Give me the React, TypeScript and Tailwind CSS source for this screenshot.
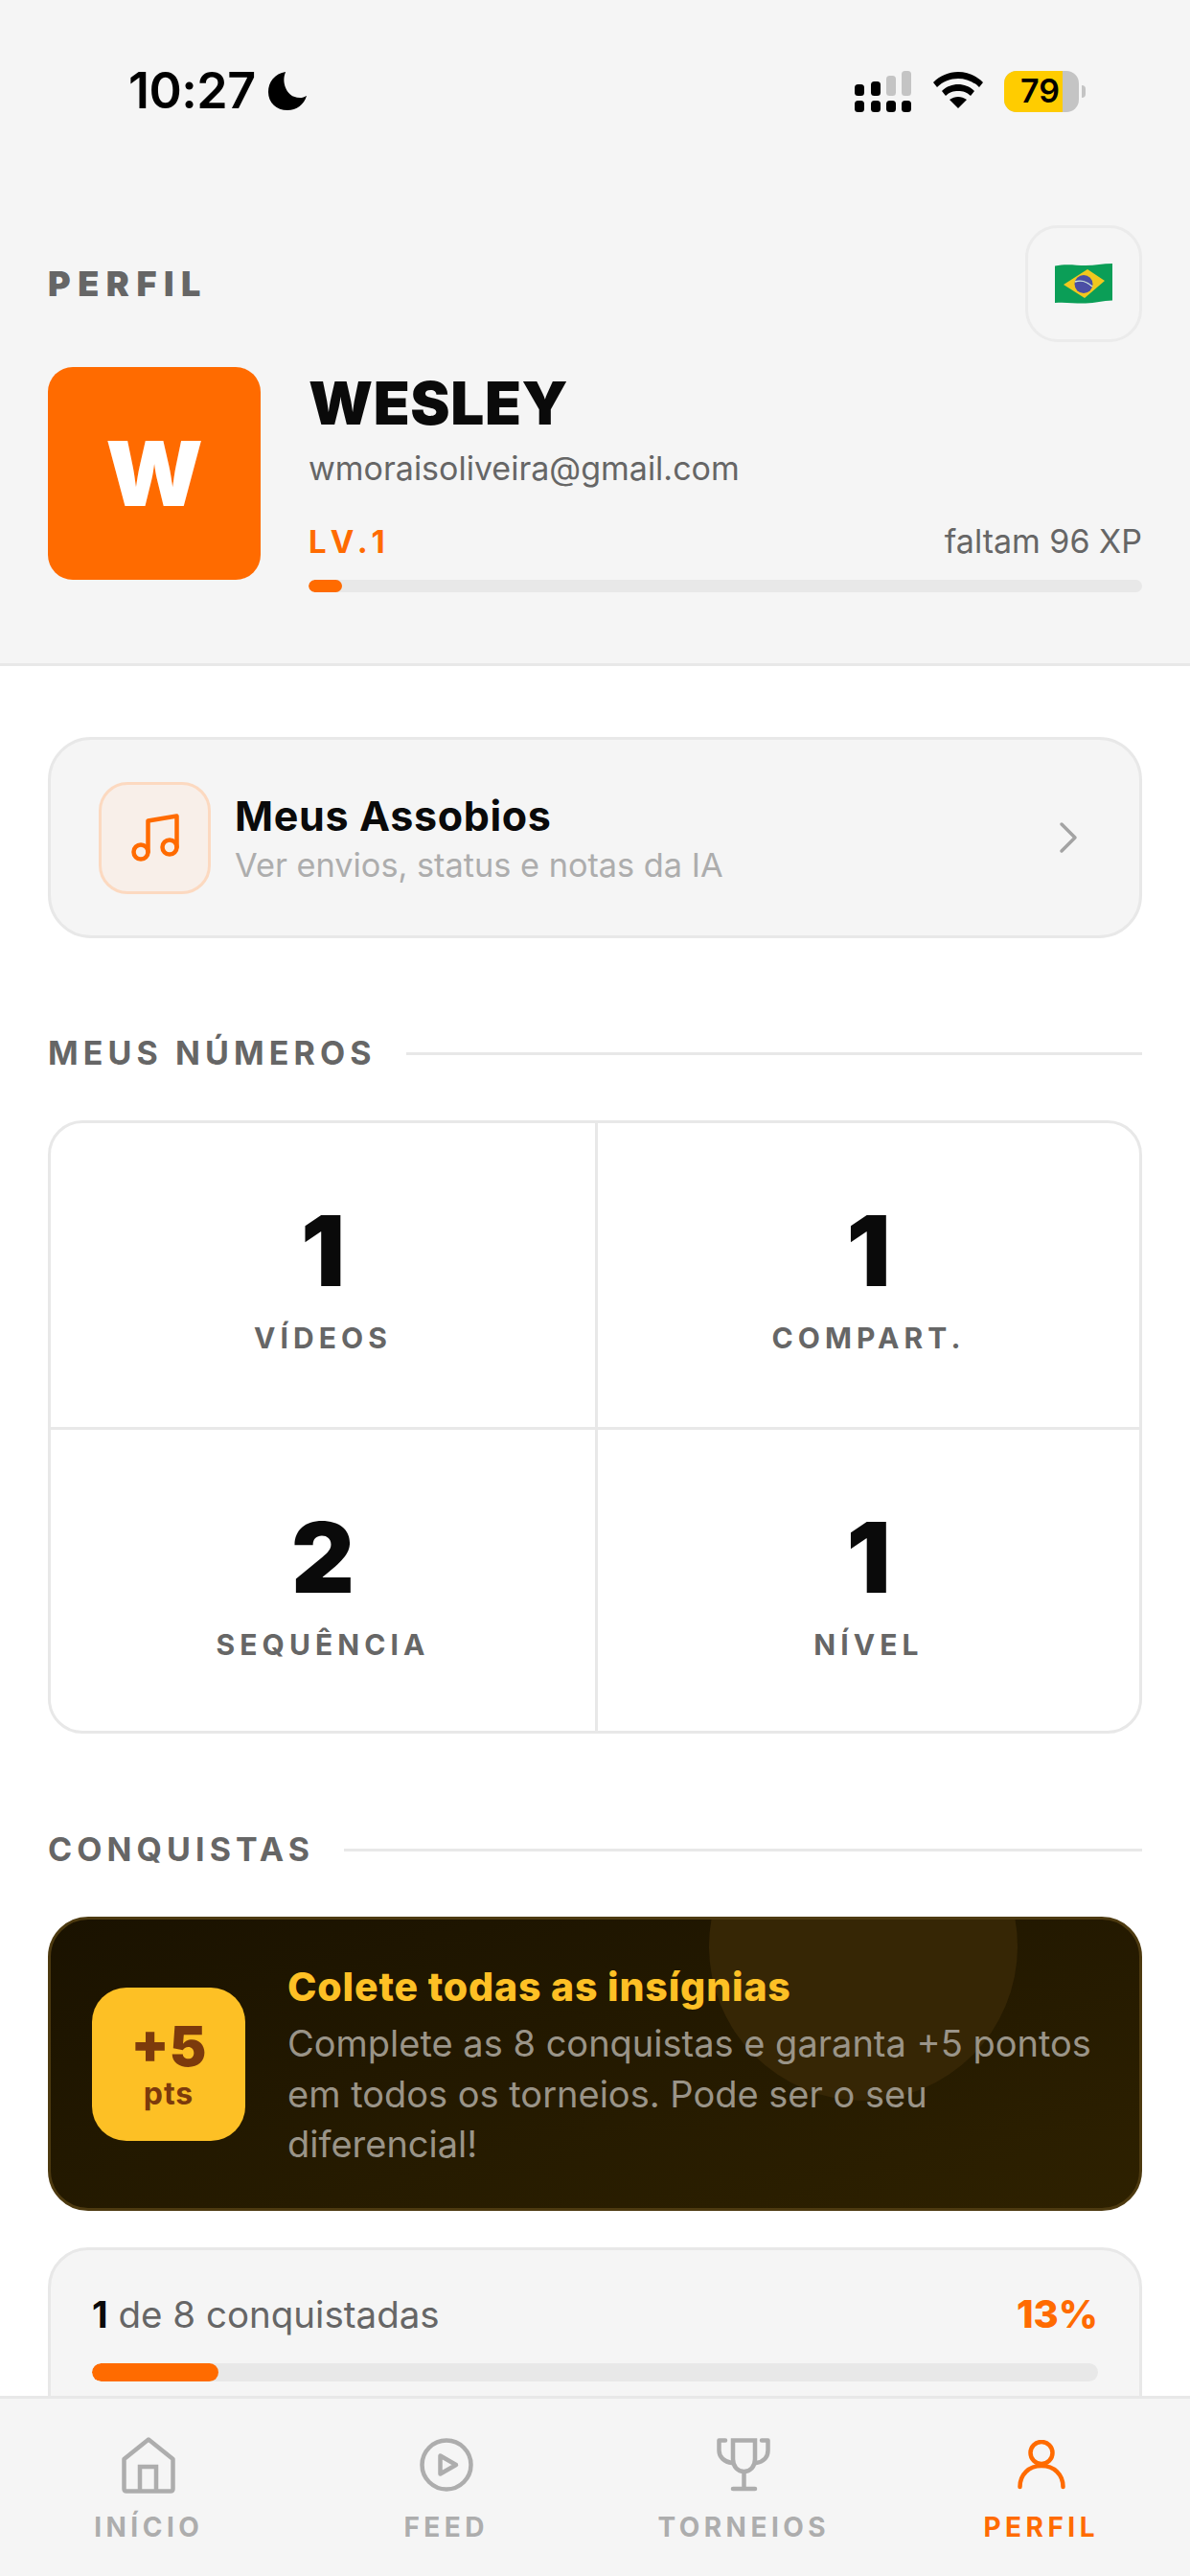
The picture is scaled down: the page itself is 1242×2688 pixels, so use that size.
import React from 'react';
import { ChevronRight } from 'lucide-react';

const sans = "font-['Inter','Liberation_Sans',sans-serif]";

function SectionTitle({ label }: { label: string }) {
  return (
    <div className="flex items-center gap-[31px]">
      <span className="text-[34px] leading-[40px] font-bold tracking-[0.15em] text-[#666666] whitespace-nowrap">{label}</span>
      <div className="flex-1 h-[3px] bg-[#e8e8e8]" />
    </div>
  );
}

function Stat({ value, label, className }: { value: string; label: string; className?: string }) {
  return (
    <div className={`flex flex-col items-center pt-[81px] ${className ?? ''}`}>
      <span className="text-[102px] leading-[104px] font-black text-[#0a0a0a]">{value}</span>
      <span className="mt-[21px] text-[30px] leading-[36px] font-bold tracking-[0.17em] text-[#666666]">{label}</span>
    </div>
  );
}

function BrazilFlag() {
  return (
    <svg width="60" height="44" viewBox="0 0 60 44">
      <path d="M0 3.5C12 1 22 3 32 3C42 3 50 1 60 1V39.5C50 40 42 42 32 42.5C22 43 12 41 0 42Z" fill="#0b9e57" />
      <path d="M9 23L34 7L52 19L31 37Z" fill="#f2c81e" />
      <circle cx="30" cy="22.5" r="9.5" fill="#4b4fa5" />
      <path d="M21 20C27 18 34 20 39 25" stroke="#cfe8dc" strokeWidth="1.5" fill="none" />
    </svg>
  );
}

function StatusBar() {
  return (
    <div className="h-[140px] pt-[68px] pl-[134px] pr-[109px] flex items-start justify-between">
      <div className="flex items-center gap-[13px] h-[54px]">
        <span className="text-[52px] leading-[54px] font-semibold text-black tracking-[-0.01em]">10:27</span>
        <svg width="42" height="42" viewBox="0 0 44 44">
          <path d="M19 1C7 3 0 12 0 23C0 35 9 43 21 43C31 43 39 37 42 27C38 30 33 30 28 28C20 25 14 12 19 1Z" fill="#000" />
        </svg>
      </div>
      <div className="flex items-center gap-[22px] h-[54px]">
        <svg width="60" height="43" viewBox="0 0 60 43">
          <rect x="0" y="14" width="10" height="12" rx="3.5" fill="#000" />
          <rect x="17" y="11" width="10" height="15" rx="3.5" fill="#000" />
          <rect x="33" y="5" width="10" height="21" rx="3.5" fill="#c4c4c4" />
          <rect x="49" y="0" width="10" height="26" rx="3.5" fill="#c4c4c4" />
          <rect x="0" y="31" width="10" height="12" rx="3.5" fill="#000" />
          <rect x="17" y="31" width="10" height="12" rx="3.5" fill="#000" />
          <rect x="33" y="31" width="10" height="12" rx="3.5" fill="#000" />
          <rect x="49" y="31" width="10" height="12" rx="3.5" fill="#000" />
        </svg>
        <svg width="52" height="40" viewBox="0 0 52 40">
          <path d="M26 0C36 0 45 4 52 11L48 16C42 10 34 7 26 7C18 7 10 10 4 16L0 11C7 4 16 0 26 0Z" fill="#000" />
          <path d="M26 13C32 13 38 15 43 20L39 25C35 21 31 20 26 20C21 20 17 21 13 25L9 20C14 15 20 13 26 13Z" fill="#000" />
          <path d="M26 26C29 26 32 27 35 29L26 38L17 29C20 27 23 26 26 26Z" fill="#000" />
        </svg>
        <div className="flex items-center gap-[3px]">
          <div className="relative w-[78px] h-[43px] rounded-[13px] bg-[#c4c4c4] overflow-hidden">
            <div className="h-full w-[61px] bg-[#ffcc00] flex items-center justify-end pr-[3px]">
              <span className="text-[34px] leading-[40px] font-semibold text-black">79</span>
            </div>
          </div>
          <div className="w-[4px] h-[13px] rounded-r-[4px] bg-[#c4c4c4]" />
        </div>
      </div>
    </div>
  );
}

function NavItem({ label, active, children }: { label: string; active?: boolean; children: React.ReactNode }) {
  return (
    <div className="flex flex-col items-center">
      <div className={`h-[62px] flex items-center justify-center ${active ? 'text-[#ff6b00]' : 'text-[#adadad]'}`}>{children}</div>
      <span className={`mt-[18px] text-[28px] leading-[32px] font-bold tracking-[0.16em] ${active ? 'text-[#ff6b00]' : 'text-[#adadad]'}`}>{label}</span>
    </div>
  );
}

export default function App() {
  return (
    <div className={`${sans} relative w-[1242px] h-[2688px] overflow-hidden bg-white flex flex-col`}>
      <div className="flex-1 min-h-0 overflow-hidden">
        {/* Header */}
        <div className="h-[695px] bg-[#f5f5f5] border-b-[3px] border-[#e8e8e8]">
          <StatusBar />
          <div className="px-[50px]">
            <div className="flex items-center justify-between mt-[95px]">
              <span className="text-[36px] leading-[40px] font-black tracking-[0.21em] text-[#666666]">PERFIL</span>
              <div className="w-[122px] h-[122px] rounded-[34px] border-[3px] border-[#ebebeb] flex items-center justify-center">
                <BrazilFlag />
              </div>
            </div>
            <div className="flex mt-[26px]">
              <div className="w-[222px] h-[222px] rounded-[26px] bg-[#ff6b00] flex items-center justify-center shrink-0">
                <span className="text-[94px] leading-none font-black text-white">W</span>
              </div>
              <div className="flex-1 ml-[50px]">
                <div className="text-[62px] leading-[64px] font-black text-[#0a0a0a] tracking-[0.01em] mt-[6px]">WESLEY</div>
                <div className="mt-[16px] text-[34px] leading-[40px] text-[#666666]">wmoraisoliveira@gmail.com</div>
                <div className="mt-[36px] flex items-center justify-between">
                  <span className="text-[33px] leading-[40px] font-bold tracking-[0.2em] text-[#ff6b00]">LV.1</span>
                  <span className="text-[34px] leading-[40px] text-[#666666]">faltam 96 XP</span>
                </div>
                <div className="mt-[20px] h-[13px] rounded-full bg-[#e8e8e8] overflow-hidden">
                  <div className="h-full w-[35px] rounded-full bg-[#ff6b00]" />
                </div>
              </div>
            </div>
          </div>
        </div>

        <div className="px-[50px] pt-[74px]">
          {/* Meus Assobios */}
          <div className="h-[210px] rounded-[45px] bg-[#f5f5f5] border-[3px] border-[#e8e8e8] flex items-center pl-[50px] pr-[46px]">
            <div className="w-[117px] h-[117px] rounded-[30px] bg-[#f8efe9] border-[3px] border-[#fcd9c0] flex items-center justify-center shrink-0">
              <svg width="60" height="60" viewBox="0 0 24 24" fill="none" stroke="#ff6b00" strokeWidth="1.8" strokeLinecap="round" strokeLinejoin="round">
                <path d="M9 18V5l12-2v13" />
                <circle cx="6" cy="18" r="3" />
                <circle cx="18" cy="16" r="3" />
              </svg>
            </div>
            <div className="ml-[25px] flex-1">
              <div className="text-[43px] leading-[50px] font-bold tracking-[0.015em] text-[#0a0a0a]">Meus Assobios</div>
              <div className="mt-[7px] text-[34.3px] leading-[40px] text-[#adadad]">Ver envios, status e notas da IA</div>
            </div>
            <ChevronRight className="w-[56px] h-[56px] text-[#a3a3a3]" strokeWidth={1.5} />
          </div>

          {/* Meus Numeros */}
          <div className="mt-[100px]">
            <SectionTitle label="MEUS NÚMEROS" />
          </div>
          <div className="mt-[50px] rounded-[36px] border-[3px] border-[#e8e8e8] grid grid-cols-[571px_1fr] overflow-hidden bg-white">
            <Stat value="1" label="VÍDEOS" className="h-[320px] border-r-[3px] border-b-[3px] border-[#e8e8e8]" />
            <Stat value="1" label="COMPART." className="h-[320px] border-b-[3px] border-[#e8e8e8]" />
            <Stat value="2" label="SEQUÊNCIA" className="h-[314px] border-r-[3px] border-[#e8e8e8]" />
            <Stat value="1" label="NÍVEL" className="h-[314px]" />
          </div>

          {/* Conquistas */}
          <div className="mt-[101px]">
            <SectionTitle label="CONQUISTAS" />
          </div>
          <div className="relative mt-[50px] h-[307px] rounded-[42px] border-[3px] border-[#4d3a10] bg-gradient-to-br from-[#1a1200] to-[#2e2100] overflow-hidden flex items-center pl-[43px]">
            <div className="absolute left-[687px] -top-[133px] w-[322px] h-[322px] rounded-full bg-[#362605]" />
            <div className="relative w-[160px] h-[160px] rounded-[36px] bg-[#fdc025] flex flex-col items-center justify-center shrink-0">
              <span className="text-[58px] leading-[60px] font-black text-[#7c3a0c]">+5</span>
              <span className="mt-[2px] text-[32px] leading-[36px] font-bold text-[#7c3a0c] tracking-[0.03em]">pts</span>
            </div>
            <div className="relative ml-[44px] mt-[6px] flex-1 pr-[36px]">
              <div className="text-[41px] leading-[48px] font-extrabold tracking-[0.02em] text-[#fdc025]">Colete todas as insígnias</div>
              <div className="mt-[9px] text-[38px] leading-[52.5px] text-[#9a9488]">Complete as 8 conquistas e garanta +5 pontos em todos os torneios. Pode ser o seu diferencial!</div>
            </div>
          </div>

          {/* Progresso */}
          <div className="mt-[38px] rounded-[42px] bg-[#f5f5f5] border-[3px] border-[#e8e8e8] px-[43px] pt-[45px] pb-[60px]">
            <div className="flex items-center justify-between">
              <span className="text-[38.5px] leading-[44px] text-[#666666]">
                <span className="font-bold text-[#0a0a0a]">1</span> de 8 conquistadas
              </span>
              <span className="text-[40px] leading-[44px] font-extrabold text-[#ff6b00]">13%</span>
            </div>
            <div className="mt-[29px] h-[19px] rounded-full bg-[#e8e8e8] overflow-hidden">
              <div className="h-full w-[132px] rounded-full bg-[#ff6b00]" />
            </div>
          </div>
        </div>
      </div>

      {/* Bottom nav */}
      <div className="h-[188px] shrink-0 bg-[#f5f5f5] border-t-[3px] border-[#e8e8e8] grid grid-cols-4 pt-[38px]">
        <NavItem label="INÍCIO">
          <svg width="56" height="59" viewBox="0 0 56 59" fill="none" stroke="currentColor" strokeWidth="4.5" strokeLinejoin="round">
            <path d="M2.5 23L28 2.5L53.5 23V54Q53.5 56.5 51 56.5H5Q2.5 56.5 2.5 54Z" />
            <path d="M19 56V31H36V56" strokeLinejoin="miter" />
          </svg>
        </NavItem>
        <NavItem label="FEED">
          <svg width="56" height="56" viewBox="0 0 56 56" fill="none" stroke="currentColor" strokeWidth="4.5" strokeLinejoin="round">
            <circle cx="28" cy="28" r="25.5" />
            <path d="M21.5 18.5V37.5L38 28Z" />
          </svg>
        </NavItem>
        <NavItem label="TORNEIOS">
          <svg width="56" height="56" viewBox="0 0 56 56" fill="none" stroke="currentColor" strokeWidth="4.5" strokeLinecap="round" strokeLinejoin="round">
            <path d="M17 2.5H40V22C40 30 35 35 28.5 35C22 35 17 30 17 22Z" strokeLinejoin="miter" />
            <path d="M9 2.5H2.5V13C2.5 20 8 25 16 26" />
            <path d="M47 2.5H53.5V13C53.5 20 49 25 41 26" />
            <path d="M28.5 35V52" strokeLinecap="butt" />
            <path d="M17 53H40" />
          </svg>
        </NavItem>
        <NavItem label="PERFIL" active>
          <svg width="50" height="52" viewBox="0 0 50 52" fill="none" stroke="currentColor" strokeWidth="4.5" strokeLinecap="round">
            <circle cx="25" cy="13.5" r="11.5" />
            <path d="M2.5 49C2.5 36 12 27 25 27C38 27 47.5 36 47.5 49" />
          </svg>
        </NavItem>
      </div>
    </div>
  );
}
